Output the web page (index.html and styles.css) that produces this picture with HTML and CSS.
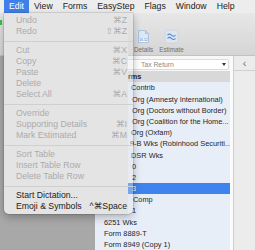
FILE: index.html
```html
<!DOCTYPE html>
<html>
<head>
<meta charset="utf-8">
<link rel="stylesheet" href="styles.css">
</head>
<body>
<div class="screen">
  <div class="menubar">
    <span class="mb-item active">Edit</span>
    <span class="mb-item">View</span>
    <span class="mb-item">Forms</span>
    <span class="mb-item">EasyStep</span>
    <span class="mb-item">Flags</span>
    <span class="mb-item">Window</span>
    <span class="mb-item">Help</span>
  </div>
  <div class="window">
    <div class="toolbar">
      <div class="edge-icon"></div>
      <div class="tools">
        <div class="tool">
          <svg class="ticon" width="15" height="15" viewBox="0 0 15 15">
            <path d="M2.5 1.5h7l3 3v9h-10z" fill="#dbe9f7" stroke="#9cbde0" stroke-width="0.8"/>
            <path d="M9.5 1.5v3h3" fill="#b9d2ec" stroke="#9cbde0" stroke-width="0.8"/>
            <rect x="3.5" y="9.2" width="8" height="3.6" fill="#ffffff"/>
            <text x="7.5" y="12.2" font-size="3.4" text-anchor="middle" fill="#2d5f9e" font-family="Liberation Sans">16.52</text>
          </svg>
          <span>Details</span>
        </div>
        <div class="tool">
          <svg class="ticon" width="15" height="15" viewBox="0 0 15 15">
            <rect x="1" y="1" width="13" height="13" rx="2.5" fill="#dfe5ee" stroke="#c3cedc" stroke-width="0.6"/>
            <path d="M3.5 6.2c1.3-1.4 2.6-1.4 4 0s2.7 1.4 4 0" fill="none" stroke="#4f8fd6" stroke-width="1.1"/>
            <path d="M3.5 9.4c1.3-1.4 2.6-1.4 4 0s2.7 1.4 4 0" fill="none" stroke="#4f8fd6" stroke-width="1.1"/>
          </svg>
          <span>Estimate</span>
        </div>
      </div>
    </div>
    <div class="main">
      <div class="sidebar"></div>
      <div class="center">
        <div class="popup-row">
          <div class="popup"><span>Tax Return</span><span class="tri"></span></div>
        </div>
        <div class="list">
          <div class="list-head">Forms</div>
          <div class="row in-36">Contrib</div>
          <div class="row in-37">Org (Amnesty International)</div>
          <div class="row in-37">Org (Doctors without Border)</div>
          <div class="row in-37">Org (Coalition for the Home...</div>
          <div class="row in-36">Org (Oxfam)</div>
          <div class="row in-35">9-B Wks (Robinhood Securiti...</div>
          <div class="row in-36">DSR Wks</div>
          <div class="row in-37">0</div>
          <div class="row in-37">2</div>
          <div class="row in-37 selected">3</div>
          <div class="row in-38">Comp</div>
          <div class="row in-37">1</div>
          <div class="row">6251 Wks</div>
          <div class="row">Form 8889-T</div>
          <div class="row">Form 8949 (Copy 1)</div>
        </div>
      </div>
      <div class="divider"></div>
      <div class="panel">
        <div class="panel-top">&lsaquo;</div>
      </div>
    </div>
  </div>

  <div class="menu">
    <div class="mi"><span>Undo</span><span class="key">⌘Z</span></div>
    <div class="mi"><span>Redo</span><span class="key">⇧⌘Z</span></div>
    <div class="sep"></div>
    <div class="mi"><span>Cut</span><span class="key">⌘X</span></div>
    <div class="mi"><span>Copy</span><span class="key">⌘C</span></div>
    <div class="mi"><span>Paste</span><span class="key">⌘V</span></div>
    <div class="mi"><span>Delete</span></div>
    <div class="mi"><span>Select All</span><span class="key">⌘A</span></div>
    <div class="sep"></div>
    <div class="mi"><span>Override</span></div>
    <div class="mi"><span>Supporting Details</span><span class="key">⌘I</span></div>
    <div class="mi"><span>Mark Estimated</span><span class="key">⌘M</span></div>
    <div class="sep"></div>
    <div class="mi"><span>Sort Table</span></div>
    <div class="mi"><span>Insert Table Row</span></div>
    <div class="mi"><span>Delete Table Row</span></div>
    <div class="sep"></div>
    <div class="mi on"><span>Start Dictation...</span></div>
    <div class="mi on"><span>Emoji &amp; Symbols</span><span class="key">^⌘Space</span></div>
  </div>
</div>
</body>
</html>
```
FILE: styles.css
```css
* { box-sizing: border-box; margin: 0; padding: 0; }
html, body { width: 255px; height: 250px; overflow: hidden; }
body {
  font-family: "Liberation Sans", Arial, "DejaVu Sans", sans-serif;
  background: #a8a8a8;
}
.screen {
  position: relative;
  width: 255px;
  height: 250px;
  display: flex;
  flex-direction: column;
}

/* menu bar */
.menubar {
  height: 13px;
  flex: none;
  display: flex;
  padding-left: 4px;
  background: #ededed;
  font-size: 8.7px;
  line-height: 13px;
  color: #1b1b1b;
}
.mb-item { padding: 0 5px; white-space: nowrap; }
.mb-item.active { background: #3f7fe7; color: #fff; }

/* window */
.window { flex: 1; display: flex; flex-direction: column; min-height: 0; }
.toolbar {
  height: 43px;
  flex: none;
  display: flex;
  background: linear-gradient(#e7e7e7, #d5d5d5);
  border-bottom: 1px solid #c2c2c2;
}
.edge-icon {
  width: 2px;
  height: 5px;
  margin-top: 7px;
  background: #3cc24a;
}
.tools {
  display: flex;
  align-items: flex-end;
  gap: 6px;
  padding: 0 0 2px 132px;
}
.tool {
  display: flex;
  flex-direction: column;
  align-items: center;
  gap: 2px;
  font-size: 6.3px;
  line-height: 7px;
  color: #6f6f6f;
}
.ticon { display: block; }

.main {
  flex: 1;
  min-height: 0;
  display: grid;
  grid-template-columns: 95px 135px 4px 21px;
}
.sidebar { background: #a8a8a8; }
.center { display: flex; flex-direction: column; background: #f7f7f7; min-width: 0; }
.popup-row { height: 15px; padding: 3px 1px 1px 3px; flex: none; }
.popup {
  height: 11px;
  background: #fff;
  border: 1px solid #dcdcdc;
  border-radius: 2px;
  display: flex;
  align-items: center;
  justify-content: space-between;
  padding: 0 2px 0 42px;
  font-size: 6.8px;
  color: #8a8a8a;
}
.tri {
  width: 0; height: 0;
  border-left: 2.5px solid transparent;
  border-right: 2.5px solid transparent;
  border-top: 3px solid #333;
}
.list { flex: 1; background: #e8eef8; }
.list-head {
  height: 11.4px;
  line-height: 11.4px;
  background: #d8d8d8;
  padding-left: 24px;
  font-size: 7.3px;
  font-weight: bold;
  color: #222;
}
.row {
  height: 11.2px;
  line-height: 11.2px;
  padding-left: 9px;
  font-size: 7.4px;
  color: #1e1e1e;
  white-space: nowrap;
  overflow: hidden;
}
.row.in-35 { padding-left: 35px; }
.row.in-36 { padding-left: 36px; }
.row.in-37 { padding-left: 37px; }
.row.in-38 { padding-left: 38px; }
.row.selected { background: #3d84ee; color: #fff; }
.divider { background: #fbfbfb; border-right: 1px solid #cfcfcf; }
.panel { background: #ececec; }
.panel-top {
  height: 15px;
  border-bottom: 1px solid #d0d0d0;
  display: flex;
  align-items: center;
  justify-content: center;
  font-size: 11px;
  color: #777;
}

/* dropdown menu */
.menu {
  position: absolute;
  left: 4px;
  top: 13px;
  width: 129px;
  padding: 2px 0;
  background: linear-gradient(to right, #e4e4e4 124px, rgba(228,228,228,.35) 124px);
  border-radius: 0 0 5px 5px;
  box-shadow: 0 3px 8px rgba(0,0,0,.28), 0 0 0 0.5px rgba(0,0,0,.18);
  font-size: 8.7px;
}
.mi {
  height: 11px;
  line-height: 11px;
  display: flex;
  justify-content: space-between;
  padding: 0 6px 0 12px;
  color: #ababab;
  white-space: nowrap;
}
.mi.on { color: #222; }
.key { font-family: "Liberation Sans", "DejaVu Sans", sans-serif; }
.sep { height: 8px; display: flex; align-items: center; }
.sep::after { content: ""; flex: 1; height: 1px; background: #d0d0d0; }
```
